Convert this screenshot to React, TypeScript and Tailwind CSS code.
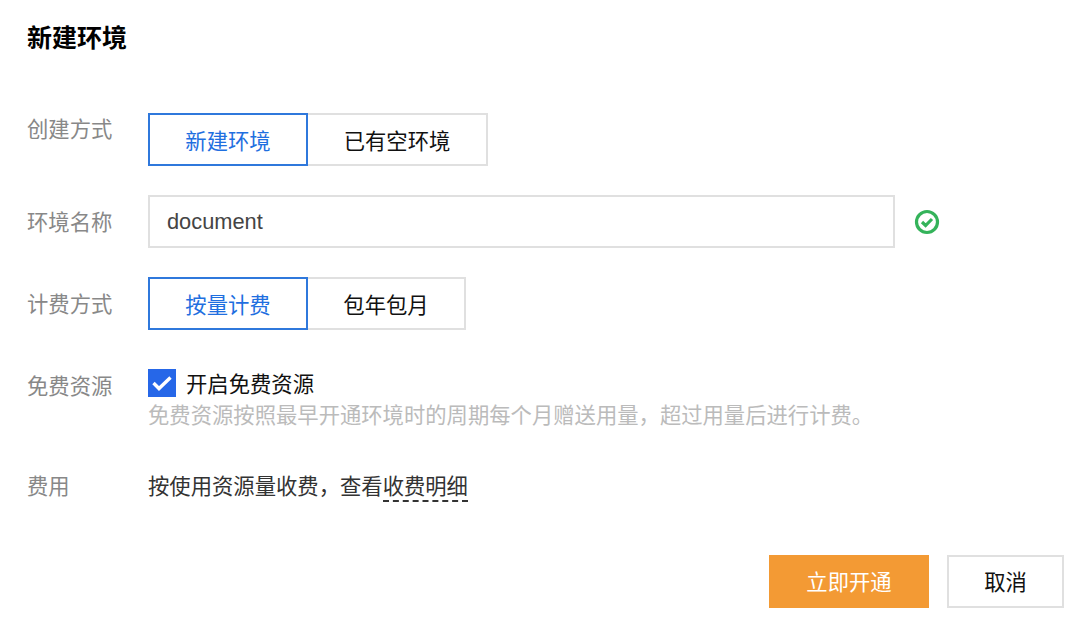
export default function App() {
  return (
    <div className="w-[1080px] h-[630px] bg-white overflow-hidden flex flex-col pl-[27px] pr-4 pt-[23px] font-['Inter','Noto_Sans_CJK_SC',sans-serif] text-[21.33px] leading-[30px] text-[#222]">
      <h1 className="text-[25px] leading-[30px] font-bold text-black">新建环境</h1>

      <div className="flex mt-[60px] h-[53px]">
        <div className="w-[121px] text-[#888] pt-[1px]">创建方式</div>
        <div className="flex">
          <div className="w-[160px] h-[53px] pt-[3px] border-2 border-[#2f78dc] text-[#1f6fe0] flex items-center justify-center">新建环境</div>
          <div className="w-[180px] h-[53px] pt-[3px] border-2 border-l-0 border-[#e0e0e0] text-[#111] flex items-center justify-center">已有空环境</div>
        </div>
      </div>

      <div className="flex mt-[29px] h-[53px] items-center">
        <div className="w-[121px] text-[#888]">环境名称</div>
        <div className="w-[747px] h-[53px] border-2 border-[#e0e0e0] flex items-center pl-[17px] text-[#444] text-[21.8px] font-['Liberation_Sans',sans-serif]">document</div>
        <svg className="ml-[19px]" width="26" height="26" viewBox="0 0 26 26" fill="none">
          <circle cx="13" cy="13" r="10.5" stroke="#34b35a" strokeWidth="3.2" />
          <path d="M8 13l3.6 3.5 6.4-6.5" stroke="#34b35a" strokeWidth="3.2" />
        </svg>
      </div>

      <div className="flex mt-[29px] h-[53px]">
        <div className="w-[121px] text-[#888] pt-[12px]">计费方式</div>
        <div className="flex">
          <div className="w-[160px] h-[53px] pt-[2px] border-2 border-[#2f78dc] text-[#1f6fe0] flex items-center justify-center">按量计费</div>
          <div className="w-[158px] h-[53px] pt-[2px] border-2 border-l-0 border-[#e0e0e0] text-[#111] flex items-center justify-center">包年包月</div>
        </div>
      </div>

      <div className="flex mt-[39px]">
        <div className="w-[121px] text-[#888] pt-[2px]">免费资源</div>
        <div className="flex flex-col">
          <div className="flex items-center h-[28px]">
            <span className="w-[28px] h-[28px] bg-[#2667e8] flex items-center justify-center">
              <svg width="22" height="20" viewBox="0 0 22 20" fill="none">
                <path d="M2.5 10l5.5 5.5 11.5-11" stroke="#fff" strokeWidth="3.4" />
              </svg>
            </span>
            <span className="ml-[10px] pt-[2px] text-[#111]">开启免费资源</span>
          </div>
          <div className="text-[#bbbbbb] mt-[3px]">免费资源按照最早开通环境时的周期每个月赠送用量，超过用量后进行计费。</div>
        </div>
      </div>

      <div className="flex mt-[41px]">
        <div className="w-[121px] text-[#888]">费用</div>
        <div className="text-[#333]">
          按使用资源量收费，查看<span className="border-b-2 border-dashed border-[#333] inline-block leading-[28px]">收费明细</span>
        </div>
      </div>

      <div className="flex justify-end mt-[53px] gap-[18px]">
        <button className="w-[160px] h-[53px] bg-[#f39a34] text-white">立即开通</button>
        <button className="w-[117px] h-[53px] border-2 border-[#e0e0e0] text-[#111]">取消</button>
      </div>
    </div>
  );
}
